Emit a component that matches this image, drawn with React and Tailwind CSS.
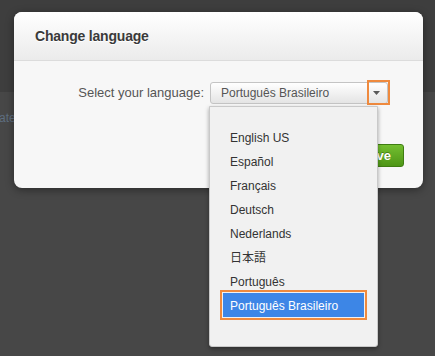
import React from "react";

const langs = [
  "English US",
  "Español",
  "Français",
  "Deutsch",
  "Nederlands",
  "日本語",
  "Português",
  "Português Brasileiro",
];

export default function App() {
  return (
    <div
      className="relative w-[435px] h-[356px] overflow-hidden bg-[#474747]"
      style={{ fontFamily: '"Liberation Sans", Arial, "Noto Sans CJK JP", sans-serif' }}
    >
      {/* background page under overlay */}
      <div className="h-[92px] bg-[#3e3e3e]" />
      <div className="pt-[19px] pl-0 text-[12px] leading-[14px] text-[#5e6e80] -ml-[1px]">ate</div>

      {/* modal */}
      <div className="absolute left-[14px] top-[12px] w-[409px] h-[176px] rounded-[8px] bg-[#f7f7f7] overflow-hidden shadow-[0_2px_8px_rgba(0,0,0,0.4)]">
        <div className="h-[49px] border-b border-[#dcdcdc] bg-gradient-to-b from-[#ffffff] to-[#ebebeb] flex items-center pl-[21px]">
          <span className="text-[14px] font-bold text-[#3a3a3a] tracking-[-0.2px] [text-shadow:0_1px_0_#fff]">
            Change language
          </span>
        </div>
        <div className="flex items-center mt-[21px]">
          <div className="w-[190px] text-right text-[13px] text-[#555] leading-[22px]">
            Select your language:
          </div>
          <div className="ml-[6px] relative w-[178px] h-[22px] rounded-[3px] border border-[#c4c4c4] bg-gradient-to-b from-[#ffffff] to-[#e4e4e4] flex items-center">
            <span className="pl-[10px] text-[12px] text-[#555] flex-1 leading-[14px] -mt-[1px]">
              Português Brasileiro
            </span>
            <div className="w-[20px] h-full flex items-center justify-center mr-[1px]">
              <svg width="7" height="4" viewBox="0 0 7 4">
                <path d="M0 0 L7 0 L3.5 4 Z" fill="#5a5a5a" />
              </svg>
            </div>
            <div className="absolute -right-[3px] -top-[3px] w-[23px] h-[25px] border-2 border-[#ef8a3e]" />
          </div>
        </div>
        <div className="flex justify-end pr-[19px] mt-[40px]">
          <button className="h-[23px] px-[12px] rounded-[3px] border border-[#3f7d12] bg-gradient-to-b from-[#74bf30] to-[#4e9616] text-white text-[13px] font-bold [text-shadow:0_-1px_0_rgba(0,0,0,0.3)]">
            Save
          </button>
        </div>
      </div>

      {/* dropdown list */}
      <div className="absolute left-[209px] top-[106px] w-[169px] h-[241px] bg-[#f1f1f1] border border-[#c9c9c9] rounded-b-[3px] shadow-[0_2px_4px_rgba(0,0,0,0.35)] pt-[18px]">
        {langs.map((l, i) => {
          const sel = i === langs.length - 1;
          return (
            <div
              key={l}
              className={
                sel
                  ? "mx-[13px] h-[24px] flex items-center pl-[7px] pt-[1px] bg-[#3d86e6] text-white text-[12px] outline-2 outline-offset-1 outline-[#ef8a3e]"
                  : "mx-[13px] h-[24px] flex items-center pl-[7px] pt-[1px] text-[#333] text-[12px]"
              }
            >
              {l}
            </div>
          );
        })}
      </div>
    </div>
  );
}
